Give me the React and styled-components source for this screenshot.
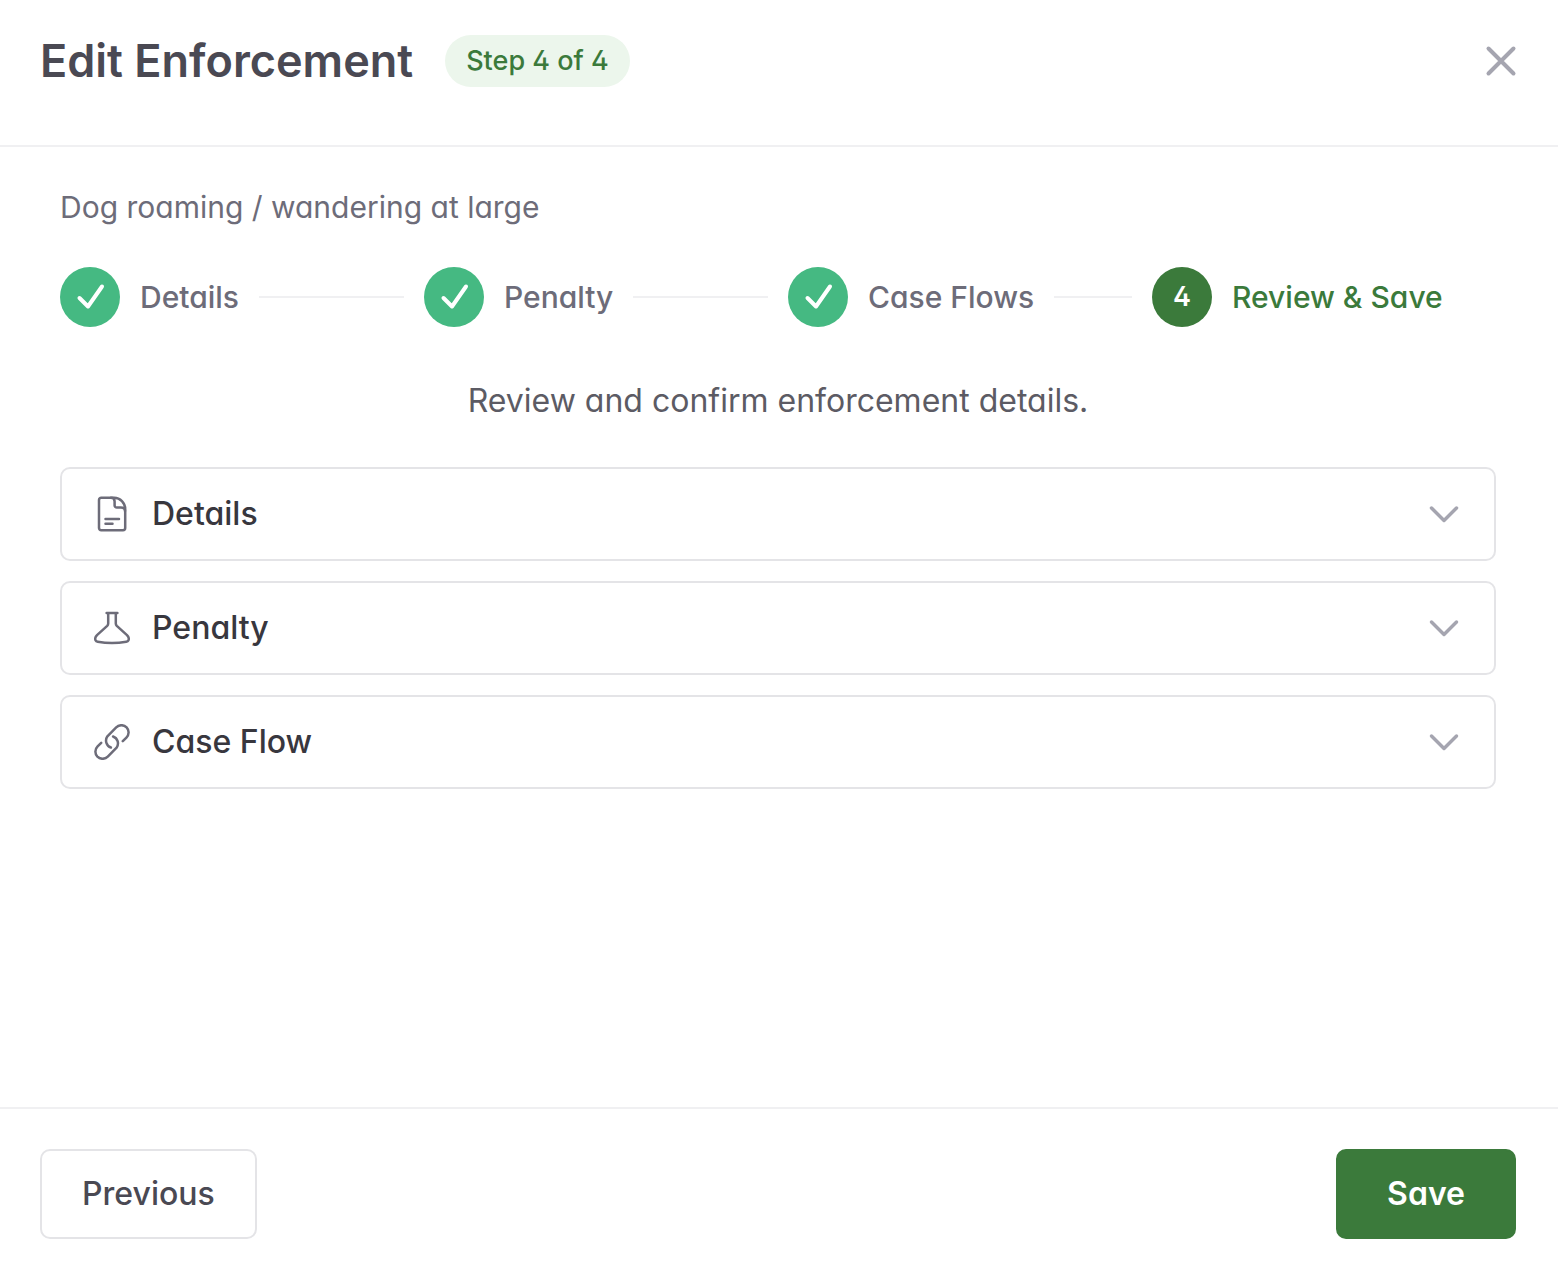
import React, { useState } from 'react';
import styled, { createGlobalStyle, css } from 'styled-components';

const steps = ['Details', 'Penalty', 'Case Flows', 'Review & Save'];
const currentStep = 4;

const DocumentIcon = () => (
  <IconSvg viewBox="0 0 36 36" aria-hidden="true">
    <path d="M7 1.8h13.2C26.2 1.8 31.2 6.8 31.2 13v19a2.2 2.2 0 0 1-2.2 2.2H7.200A2.2 2.2 0 0 1 5 32V4A2.2 2.2 0 0 1 7.200 1.8Z" />
    <path d="M17 1.8c2.4 0 3.6 1.4 3.6 3.6v4a2.2 2.2 0 0 0 2.2 2.2h4c2.4 0 4.2 1.2 4.2 3.4" />
    <path d="M11.5 23H25M11.5 27.8h7" />
  </IconSvg>
);

const FlaskIcon = () => (
  <IconSvg viewBox="0 0 36 36" aria-hidden="true">
    <path d="M12.6 3h10.8M14.2 3v10.4c0 1-.3 1.7-1 2.4L3 25.2c-1.6 1.6-2.2 3.4-1.5 5 .4.9 1.1 1.4 2.2 1.6 9 1.6 19.6 1.6 28.6 0 1.1-.2 1.8-.7 2.2-1.6.7-1.6.1-3.4-1.5-5L22.800 15.800c-.7-.7-1-1.400-1-2.400V3" />
  </IconSvg>
);

const LinkIcon = () => (
  <IconSvg viewBox="0 0 36 36" aria-hidden="true">
    <path d="M28.8 17.2 32.4 13.6A7.4 7.4 0 0 0 32.6 3.3 7.4 7.4 0 0 0 22.2 3.4L13.4 12.3A7.4 7.4 0 0 0 16.9 23.5" />
    <path d="M7.2 18.8 3.6 22.4A7.4 7.4 0 0 0 3.4 32.7 7.4 7.4 0 0 0 13.8 32.6L22.6 23.7A7.4 7.4 0 0 0 19.1 12.5" />
  </IconSvg>
);

const sections = [
  { title: 'Details', Icon: DocumentIcon },
  { title: 'Penalty', Icon: FlaskIcon },
  { title: 'Case Flow', Icon: LinkIcon },
];

const App = () => {
  const [opened, setOpened] = useState(null);

  const toggleHandler = (title) => {
    setOpened(opened === title ? null : title);
  };

  return (
    <>
      <GlobalStyle />
      <Container>
        <Header>
          <Title>Edit Enforcement</Title>
          <Badge>Step 4 of 4</Badge>
          <CloseButton type="button" aria-label="Close">
            <svg width="34" height="34" viewBox="0 0 34 34" aria-hidden="true">
              <path d="M4.500 4.500l25 25M29.500 4.500l-25 25" />
            </svg>
          </CloseButton>
        </Header>
        <Body>
          <Subtitle>Dog roaming / wandering at large</Subtitle>
          <Steps>
            {steps.map((label, i) => {
              const active = i + 1 === currentStep;
              return (
                <Step key={label} $active={active}>
                  <StepCircle $active={active}>
                    {active ? (
                      i + 1
                    ) : (
                      <svg width="30" height="30" viewBox="0 0 30 30" aria-hidden="true">
                        <path d="M4.5 16l8.5 8.500L27 4.500" />
                      </svg>
                    )}
                  </StepCircle>
                  <span>{label}</span>
                  {i < steps.length - 1 && <StepLine />}
                </Step>
              );
            })}
          </Steps>
          <Guide>Review and confirm enforcement details.</Guide>
          <SectionList>
            {sections.map(({ title, Icon }) => (
              <SectionButton
                key={title}
                type="button"
                aria-expanded={opened === title}
                onClick={() => toggleHandler(title)}
              >
                <Icon />
                <span>{title}</span>
                <Chevron viewBox="0 0 36 36" $open={opened === title} aria-hidden="true">
                  <path d="M5.5 12L18 24.5 30.5 12" />
                </Chevron>
              </SectionButton>
            ))}
          </SectionList>
        </Body>
        <Footer>
          <Button type="button">Previous</Button>
          <Button type="button" $primary>
            Save
          </Button>
        </Footer>
      </Container>
    </>
  );
};

export default App;

const GlobalStyle = createGlobalStyle`
  * {
    box-sizing: border-box;
  }
  body {
    margin: 0;
    background-color: #fff;
    font-family: Inter, 'Liberation Sans', sans-serif;
    font-feature-settings: 'cv02', 'cv11';
    font-optical-sizing: none;
  }
  button {
    font: inherit;
    font-feature-settings: inherit;
    cursor: pointer;
  }
`;

const Container = styled.div`
  display: flex;
  flex-direction: column;
  min-height: 100vh;
`;

const Header = styled.header`
  display: flex;
  align-items: center;
  padding: 32px 40px 55px;
  border-bottom: 2px solid #f0f0f2;
`;

const Title = styled.h1`
  margin: 0 32px 0 0;
  font-size: 45px;
  font-weight: 600;
  line-height: 58px;
  color: #4a4953;
`;

const Badge = styled.span`
  padding: 0 21px;
  border-radius: 26px;
  background-color: #ecf6ec;
  font-size: 27px;
  font-weight: 500;
  line-height: 52px;
  color: #3b7a3b;
`;

const CloseButton = styled.button`
  display: flex;
  margin-left: auto;
  padding: 0;
  border: none;
  background: none;
  svg {
    fill: none;
    stroke: #a5a5b0;
    stroke-width: 4;
    stroke-linecap: round;
  }
`;

const Body = styled.main`
  flex: 1;
  padding: 40px 62px 40px 60px;
`;

const Subtitle = styled.p`
  margin: 0 0 40px;
  font-size: 30px;
  line-height: 40px;
  color: #6d6c79;
`;

const Steps = styled.ol`
  display: grid;
  grid-template-columns: repeat(4, 1fr);
  gap: 20px;
  margin: 0 0 50px;
  padding: 0;
  list-style: none;
`;

const Step = styled.li`
  display: flex;
  align-items: center;
  gap: 20px;
  font-size: 30px;
  font-weight: 500;
  line-height: 40px;
  white-space: nowrap;
  color: ${({ $active }) => ($active ? '#3b7a3b' : '#6d6c79')};
`;

const StepCircle = styled.span`
  display: flex;
  flex-shrink: 0;
  align-items: center;
  justify-content: center;
  width: 60px;
  height: 60px;
  border-radius: 50%;
  background-color: ${({ $active }) => ($active ? '#3b7a3b' : '#45b982')};
  font-size: 27px;
  font-weight: 600;
  color: #fff;
  svg {
    fill: none;
    stroke: #fff;
    stroke-width: 4;
    stroke-linecap: round;
    stroke-linejoin: round;
  }
`;

const StepLine = styled.span`
  flex: 1;
  height: 2px;
  background-color: #f0f0f2;
`;

const Guide = styled.p`
  margin: 0 0 42px;
  font-size: 32px;
  line-height: 48px;
  text-align: center;
  color: #5c5b64;
`;

const SectionList = styled.div`
  display: flex;
  flex-direction: column;
  gap: 20px;
`;

const SectionButton = styled.button`
  display: flex;
  align-items: center;
  gap: 22px;
  width: 100%;
  padding: 25px 32px;
  border: 2px solid #e4e4e7;
  border-radius: 10px;
  background-color: #fff;
  font-size: 32px;
  font-weight: 500;
  line-height: 40px;
  color: #38373e;
`;

const IconSvg = styled.svg`
  flex-shrink: 0;
  width: 36px;
  height: 36px;
  fill: none;
  stroke: #6d6c79;
  stroke-width: 2.5;
  stroke-linecap: round;
  stroke-linejoin: round;
`;

const Chevron = styled(IconSvg)`
  margin-left: auto;
  stroke: #a5a5b0;
  stroke-width: 3.5;
  transform: ${({ $open }) => ($open ? 'rotate(180deg)' : 'none')};
`;

const Footer = styled.footer`
  display: flex;
  justify-content: space-between;
  padding: 40px 42px 27px 40px;
  border-top: 2px solid #f0f0f2;
`;

const Button = styled.button`
  padding: 23px 40px;
  border: 2px solid #e4e4e7;
  border-radius: 10px;
  background-color: #fff;
  font-size: 32px;
  font-weight: 500;
  line-height: 40px;
  color: #4a4953;
  ${({ $primary }) =>
    $primary &&
    css`
      padding: 23px 49px;
      border-color: #3b7a3b;
      background-color: #3b7a3b;
      font-weight: 600;
      color: #fff;
    `}
`;
